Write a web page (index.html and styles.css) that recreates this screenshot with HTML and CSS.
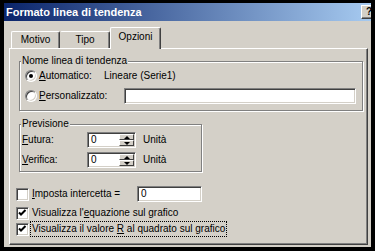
FILE: index.html
```html
<!DOCTYPE html>
<html lang="it">
<head>
    <meta charset="UTF-8">
    <title>Formato linea di tendenza</title>
    <link rel="stylesheet" href="styles.css">
</head>
<body>
    <div class="window">
        <div class="titlebar">
            <span class="title">Formato linea di tendenza</span>
            <span class="help-btn">?</span>
        </div>

        <div class="tabs">
            <div class="tab">Motivo</div>
            <div class="tab">Tipo</div>
            <div class="tab active">Opzioni</div>
        </div>

        <div class="panel">
            <fieldset class="group group-name">
                <legend>Nome linea di tendenza</legend>
                <div class="row first">
                    <span class="radio checked"><span class="dot"></span></span>
                    <span class="radio-label auto"><u>A</u>utomatico:</span>
                    <span>Lineare (Serie1)</span>
                </div>
                <div class="row">
                    <span class="radio"></span>
                    <span class="radio-label custom"><u>P</u>ersonalizzato:</span>
                    <span class="field name-field"></span>
                </div>
            </fieldset>

            <fieldset class="group group-forecast">
                <legend>Previsione</legend>
                <div class="row first">
                    <span class="spin-label"><u>F</u>utura:</span>
                    <span class="spinner">
                        <span class="spin-value">0</span>
                        <span class="spin-btns">
                            <span class="spin-btn"><span class="arrow-up"></span></span>
                            <span class="spin-btn"><span class="arrow-down"></span></span>
                        </span>
                    </span>
                    <span class="unit">Unità</span>
                </div>
                <div class="row">
                    <span class="spin-label"><u>V</u>erifica:</span>
                    <span class="spinner">
                        <span class="spin-value">0</span>
                        <span class="spin-btns">
                            <span class="spin-btn"><span class="arrow-up"></span></span>
                            <span class="spin-btn"><span class="arrow-down"></span></span>
                        </span>
                    </span>
                    <span class="unit">Unità</span>
                </div>
            </fieldset>

            <div class="check-row intercept">
                <span class="checkbox"></span>
                <span class="check-label intercept-label"><u>I</u>mposta intercetta =</span>
                <span class="field intercept-field">0</span>
            </div>
            <div class="check-row equation">
                <span class="checkbox">
                    <svg width="9" height="9" viewBox="0 0 9 9"><polyline points="1,3.5 3,5.5 7.5,1" fill="none" stroke="#000" stroke-width="2"/></svg>
                </span>
                <span class="check-label">Visualizza l'<u>e</u>quazione sul grafico</span>
            </div>
            <div class="check-row">
                <span class="checkbox">
                    <svg width="9" height="9" viewBox="0 0 9 9"><polyline points="1,3.5 3,5.5 7.5,1" fill="none" stroke="#000" stroke-width="2"/></svg>
                </span>
                <span class="check-label focused">Visualizza il valore <u>R</u> al quadrato sul grafico</span>
            </div>
        </div>
    </div>
</body>
</html>
```

FILE: styles.css
```css
html, body {
    margin: 0;
    height: 251px;
    overflow: hidden;
}

body {
    box-sizing: border-box;
    padding: 3px 4px 0 4px;
    background-color: #000;
    font-family: "Liberation Sans", Arial, sans-serif;
    font-size: 10px;
    line-height: 12px;
    color: #000;
}

.window {
    width: 367px;
    height: 244px;
    background-color: #d4d0c8;
    overflow: hidden;
}

/* title bar */
.titlebar {
    height: 18px;
    display: flex;
    align-items: center;
    justify-content: space-between;
    padding-left: 2px;
    background: linear-gradient(to right, #0a246a, #a6caf0);
}

.title {
    color: #fff;
    font-weight: bold;
    font-size: 11px;
}

.help-btn {
    box-sizing: border-box;
    width: 16px;
    height: 14px;
    margin-right: -6px;
    display: flex;
    align-items: center;
    justify-content: center;
    background-color: #d4d0c8;
    border: 1px solid;
    border-color: #fff #404040 #404040 #fff;
    box-shadow: inset -1px -1px #808080;
    font-weight: bold;
    font-size: 10px;
}

/* tabs */
.tabs {
    height: 22px;
    margin-top: 5px;
    padding-left: 7px;
    display: flex;
    align-items: flex-end;
}

.tab {
    box-sizing: border-box;
    height: 17px;
    display: flex;
    align-items: center;
    justify-content: center;
    border: 1px solid;
    border-bottom: none;
    border-color: #fff #404040 #404040 #fff;
    border-radius: 2px 2px 0 0;
    box-shadow: inset -1px 0 #808080;
}

.tab:nth-child(1) { width: 49px; }
.tab:nth-child(2) { width: 50px; border-left-color: #d4d0c8; }

.tab.active {
    width: 51px;
    height: 22px;
    margin-bottom: -1px;
    padding-bottom: 3px;
    background-color: #d4d0c8;
    position: relative;
    z-index: 1;
}

/* tab page */
.panel {
    box-sizing: border-box;
    width: 359px;
    height: 197px;
    margin-left: 5px;
    padding-left: 6px;
    border: 1px solid;
    border-color: #fff #404040 #404040 #fff;
    box-shadow: inset -1px -1px #808080;
}

.group {
    margin: 0 0 0 3px;
    padding: 0;
    min-inline-size: 0;
    border: 1px solid #808080;
    box-shadow: inset 1px 1px #fff, 1px 1px #fff;
}

.group legend {
    margin-left: 1px;
    padding: 0 1px;
    line-height: 12px;
    background-color: #d4d0c8;
}

.group-name {
    width: 344px;
    box-sizing: border-box;
    margin-top: 6px;
    padding-bottom: 6px;
}

.group-forecast {
    width: 183px;
    box-sizing: border-box;
    margin-top: 7px;
    padding-bottom: 3px;
}

.row {
    height: 16px;
    display: flex;
    align-items: center;
    margin-top: 4px;
}

.group-name .row.first { margin-top: 1px; }
.group-forecast .row.first { margin-top: 2px; }

/* radio buttons */
.radio {
    box-sizing: border-box;
    width: 12px;
    height: 12px;
    margin-left: 5px;
    display: flex;
    align-items: center;
    justify-content: center;
    border: 1px solid;
    border-color: #808080 #fff #fff #808080;
    border-radius: 50%;
    background-color: #fff;
    box-shadow: inset 1px 1px #404040, inset -1px -1px #d4d0c8;
}

.radio .dot {
    width: 4px;
    height: 4px;
    border-radius: 50%;
    background-color: #000;
}

.radio-label {
    margin-left: 2px;
}

.radio-label.auto { width: 65px; }
.radio-label.custom { width: 85px; }

/* sunken fields */
.field,
.spinner,
.checkbox {
    box-sizing: border-box;
    background-color: #fff;
    border: 1px solid;
    border-color: #808080 #fff #fff #808080;
    box-shadow: inset 1px 1px #404040, inset -1px -1px #d4d0c8;
}

.name-field {
    width: 232px;
    height: 16px;
}

/* spinners */
.spin-label {
    width: 65px;
    padding-left: 2px;
}

.spinner {
    width: 49px;
    height: 16px;
    display: flex;
    padding: 1px 1px 1px 2px;
}

.spin-value {
    flex: 1;
    padding-left: 1px;
    line-height: 12px;
}

.spin-btns {
    width: 15px;
    display: flex;
    flex-direction: column;
}

.spin-btn {
    box-sizing: border-box;
    flex: 1;
    display: flex;
    align-items: center;
    justify-content: center;
    background-color: #d4d0c8;
    border: 1px solid;
    border-color: #fff #404040 #404040 #fff;
}

.arrow-up,
.arrow-down {
    width: 0;
    height: 0;
    border-left: 3px solid transparent;
    border-right: 3px solid transparent;
}

.arrow-up { border-bottom: 3px solid #000; }
.arrow-down { border-top: 3px solid #000; }

.unit {
    margin-left: 7px;
}

/* check boxes */
.check-row {
    height: 16px;
    display: flex;
    align-items: center;
}

.check-row.intercept { margin-top: 14px; }
.check-row.equation { margin-top: 3px; }

.checkbox {
    width: 13px;
    height: 13px;
    display: flex;
    align-items: center;
    justify-content: center;
    margin-right: 1px;
}

.checkbox svg {
    display: block;
}

.check-label {
    padding: 0 1px;
    line-height: 14px;
    border: 1px dotted transparent;
}

.check-label.focused {
    border-color: #000;
}

.intercept-label {
    width: 103px;
}

.intercept-field {
    width: 65px;
    height: 16px;
    padding-left: 3px;
    line-height: 14px;
}
```
